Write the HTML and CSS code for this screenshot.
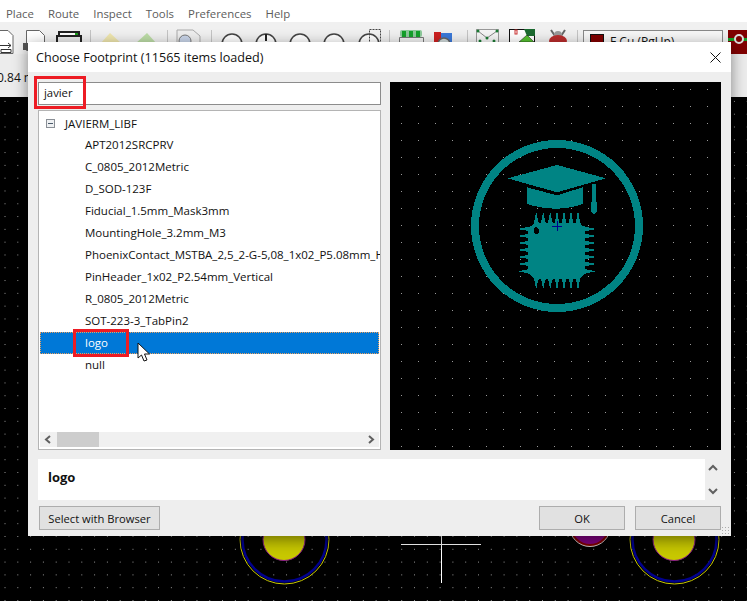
FILE: index.html
```html
<!DOCTYPE html>
<html lang="en">
<head>
  <meta charset="UTF-8">
  <title>Choose Footprint</title>
  <link rel="stylesheet" href="styles.css">
</head>
<body>

  <!-- main window behind the dialog -->
  <div class="menubar">
    <span>Place</span>
    <span>Route</span>
    <span>Inspect</span>
    <span>Tools</span>
    <span>Preferences</span>
    <span>Help</span>
  </div>

  <div class="toolbar">
    <svg class="tool-icons" width="747" height="32" viewBox="0 22 747 32">
      <path d="M90.500 30V42M167.500 30V42M211.500 30V42M389.500 30V42M467.500 30V42M577.500 30V42" stroke="#c4c4c4"/>
      <path d="M-1 30.500h9l5 5v18H-1z" fill="#fff" stroke="#666"/>
      <path d="M0 45.500h11M8 43l3 2.500-3 2.500" fill="none" stroke="#333"/>
      <path d="M1 49.500h10v3H1z" fill="none" stroke="#333"/>
      <path d="M26.500 30.500h13l5 5v15h-18z" fill="#fff" stroke="#666"/>
      <rect x="23" y="43" width="5" height="7" fill="#555"/>
      <path d="M59 36v-4h20v4" fill="#fff" stroke="#222" stroke-width="2"/>
      <rect x="57" y="36" width="24" height="9" fill="#e8e8e8" stroke="#222" stroke-width="2"/>
      <rect x="75" y="33" width="3" height="2" fill="#1a9c1a"/>
      <path d="M100 44l10-11 12 11z" fill="#efe6ae"/>
      <path d="M135 44l12-11 10 11z" fill="#bcdca6"/>
      <path d="M177 30h16l7 6v8h-23z" fill="#eee" stroke="#aaa"/>
      <circle cx="185" cy="41" r="6" fill="#c8d4e8" stroke="#777"/>
      <circle cx="232" cy="44" r="10" fill="#fff" stroke="#444" stroke-width="1.500"/>
      <circle cx="266" cy="44" r="10" fill="#fff" stroke="#444" stroke-width="1.500"/>
      <path d="M266 34v7" stroke="#222" stroke-width="2"/>
      <circle cx="300" cy="44" r="10" fill="#fff" stroke="#444" stroke-width="1.500"/>
      <circle cx="334" cy="44" r="10" fill="#fff" stroke="#444" stroke-width="1.500"/>
      <circle cx="369" cy="44" r="10" fill="#fff" stroke="#444" stroke-width="1.500"/>
      <rect x="369.500" y="29.500" width="11" height="13" fill="none" stroke="#444" stroke-dasharray="2 1"/>
      <path d="M399.500 44V37.500H423.500V44" fill="none" stroke="#777"/>
      <rect x="400" y="30" width="22" height="7" rx="2" fill="#8dc99a"/>
      <rect x="402" y="31" width="4" height="6" fill="#14a02a"/>
      <rect x="409" y="31" width="4" height="6" fill="#14a02a"/>
      <rect x="416" y="31" width="4" height="6" fill="#14a02a"/>
      <rect x="434" y="32" width="7" height="10" fill="#cc2020"/>
      <rect x="441" y="33" width="11" height="9" fill="#3a78d8"/>
      <circle cx="444" cy="44" r="6" fill="#cfd8d8" stroke="#666" stroke-width="1.500"/>
      <rect x="476.500" y="29.500" width="22" height="13" fill="#f4f4f4" stroke="#999"/>
      <path d="M478 31l9 7 10-7" fill="none" stroke="#888"/>
      <circle cx="478" cy="31" r="1.500" fill="#1c7a34"/>
      <circle cx="497" cy="31" r="1.500" fill="#1c7a34"/>
      <circle cx="487" cy="38" r="1.500" fill="#1c7a34"/>
      <circle cx="480" cy="41" r="1.500" fill="#1c7a34"/>
      <circle cx="494" cy="41" r="1.500" fill="#1c7a34"/>
      <rect x="509.500" y="29.500" width="25" height="13" fill="#fff" stroke="#111"/>
      <path d="M524 29h11v7h-8z" fill="#1c6a30"/>
      <path d="M519 42l8-7 7 7z" fill="#55c030" stroke="#111" stroke-width=".5"/>
      <rect x="515" y="30" width="2" height="4" fill="none" stroke="#c33"/>
      <path d="M551 30l4 6M565 30l-4 6" stroke="#666" stroke-width="2"/>
      <circle cx="558" cy="35" r="4" fill="#999"/>
      <ellipse cx="558" cy="41" rx="9" ry="6" fill="#b82c2c"/>
      <rect x="583.500" y="30.500" width="139" height="14" fill="#f6f6f6" stroke="#888"/>
      <rect x="590.500" y="34.500" width="13" height="10" fill="#800000" stroke="#111"/>
      <text x="610" y="46" class="layer-name">F.Cu (PgUp)</text>
      <rect x="728" y="30" width="19" height="24" fill="#800000"/>
      <rect x="728" y="38" width="19" height="3" fill="#14a02a"/>
      <circle cx="739" cy="39" r="4" fill="#800000" stroke="#ddd" stroke-width="2"/>
    </svg>
  </div>

  <div class="toolbar-two">
    <span class="coord">0.84 m</span>
  </div>

  <div class="canvas">
    <!-- pads that show under the dialog -->
    <svg class="pads" width="747" height="66" viewBox="0 535 747 66">
      <circle cx="284.500" cy="539.500" r="44.500" fill="none" stroke="#c8c800"/>
      <circle cx="284.500" cy="539.500" r="42" fill="none" stroke="#00008c" stroke-width="2.500"/>
      <circle cx="284" cy="539.500" r="21" fill="#c8c800" stroke="#8a1a8a"/>
      <circle cx="590" cy="526" r="20.500" fill="#800000" stroke="#c8c8c8"/>
      <circle cx="590" cy="526" r="18" fill="#800080"/>
      <circle cx="674.500" cy="539.500" r="44.500" fill="none" stroke="#c8c800"/>
      <circle cx="674.500" cy="539.500" r="42" fill="none" stroke="#00008c" stroke-width="2.500"/>
      <circle cx="674" cy="539.500" r="21" fill="#c8c800" stroke="#8a1a8a"/>
      <path d="M401 544.500h80M441.500 535v48" stroke="#fff"/>
    </svg>
  </div>

  <!-- dialog -->
  <div class="dialog">
    <div class="dialog-title">
      <span>Choose Footprint (11565 items loaded)</span>
      <svg class="close-x" width="11" height="11" viewBox="0 0 11 11">
        <path d="M.5.500l10 10M10.500.500l-10 10" stroke="#111" fill="none"/>
      </svg>
    </div>

    <div class="dialog-body">
      <div class="main-row">
        <div class="left-col">
          <div class="search-box">javier</div>
          <div class="tree">
            <div class="tree-row lib-row">
              <span class="expander"></span>
              <span>JAVIERM_LIBF</span>
            </div>
            <div class="tree-row">APT2012SRCPRV</div>
            <div class="tree-row">C_0805_2012Metric</div>
            <div class="tree-row">D_SOD-123F</div>
            <div class="tree-row">Fiducial_1.5mm_Mask3mm</div>
            <div class="tree-row">MountingHole_3.2mm_M3</div>
            <div class="tree-row">PhoenixContact_MSTBA_2,5_2-G-5,08_1x02_P5.08mm_Horizontal</div>
            <div class="tree-row">PinHeader_1x02_P2.54mm_Vertical</div>
            <div class="tree-row">R_0805_2012Metric</div>
            <div class="tree-row">SOT-223-3_TabPin2</div>
            <div class="tree-row selected">logo</div>
            <div class="tree-row">null</div>

            <div class="hscroll">
              <svg width="17" height="15" viewBox="0 0 17 15"><path d="M10 4l-4 3.500 4 3.500" class="arrow"/></svg>
              <div class="hscroll-track"><div class="hscroll-thumb"></div></div>
              <svg width="17" height="15" viewBox="0 0 17 15"><path d="M7 4l4 3.500-4 3.500" class="arrow"/></svg>
            </div>
          </div>
        </div>

        <div class="preview">
          <svg width="210" height="187" viewBox="0 0 630 561">
            <defs>
              <path id="pin-v" d="M-10 42L-6 22-3 12-2 0H2L3 12 6 22 10 42z"/>
              <path id="pin-h" d="M42-10L22-5 12-3 0-1V1L12 3 22 5 42 10z"/>
            </defs>
            <g fill="#008484" shape-rendering="crispEdges">
              <ellipse cx="318" cy="288" rx="246" ry="246" fill="none" stroke="#008484" stroke-width="24"/>
              <path d="M170 145L318 105 465 145 318 187z"/>
              <path d="M228 172L318 196 395 172V222Q318 250 228 222z"/>
              <path d="M423 162H435V215L438 220V245L429 255 420 245V220L423 215z"/>
              <path d="M250 280H385L402 295V430L385 447H250L232 430V295z"/>
              <use href="#pin-v" x="256" y="250"/>
              <use href="#pin-v" x="277" y="250"/>
              <use href="#pin-v" x="298" y="250"/>
              <use href="#pin-v" x="318" y="250"/>
              <use href="#pin-v" x="339" y="250"/>
              <use href="#pin-v" x="360" y="250"/>
              <use href="#pin-v" x="381" y="250"/>
              <use href="#pin-v" transform="translate(256 474) scale(1 -1)"/>
              <use href="#pin-v" transform="translate(277 474) scale(1 -1)"/>
              <use href="#pin-v" transform="translate(298 474) scale(1 -1)"/>
              <use href="#pin-v" transform="translate(318 474) scale(1 -1)"/>
              <use href="#pin-v" transform="translate(339 474) scale(1 -1)"/>
              <use href="#pin-v" transform="translate(360 474) scale(1 -1)"/>
              <use href="#pin-v" transform="translate(381 474) scale(1 -1)"/>
              <use href="#pin-h" x="204" y="297"/>
              <use href="#pin-h" x="204" y="318"/>
              <use href="#pin-h" x="204" y="339"/>
              <use href="#pin-h" x="204" y="360"/>
              <use href="#pin-h" x="204" y="381"/>
              <use href="#pin-h" x="204" y="402"/>
              <use href="#pin-h" x="204" y="424"/>
              <use href="#pin-h" transform="translate(433 297) scale(-1 1)"/>
              <use href="#pin-h" transform="translate(433 318) scale(-1 1)"/>
              <use href="#pin-h" transform="translate(433 339) scale(-1 1)"/>
              <use href="#pin-h" transform="translate(433 360) scale(-1 1)"/>
              <use href="#pin-h" transform="translate(433 381) scale(-1 1)"/>
              <use href="#pin-h" transform="translate(433 402) scale(-1 1)"/>
              <use href="#pin-h" transform="translate(433 424) scale(-1 1)"/>
              <ellipse cx="256" cy="302" rx="8" ry="10" fill="#000"/>
            </g>
            <path d="M303 289H333M318 274V304" stroke="#00008c" stroke-width="3" shape-rendering="crispEdges"/>
          </svg>
        </div>
      </div>

      <div class="details-row">
        <div class="details">logo</div>
        <div class="vscroll">
          <svg width="16" height="12" viewBox="0 0 16 12"><path d="M4 8l4-4 4 4" class="arrow"/></svg>
          <svg width="16" height="12" viewBox="0 0 16 12"><path d="M4 4l4 4 4-4" class="arrow"/></svg>
        </div>
      </div>

      <div class="button-row">
        <button class="btn browser-btn">Select with Browser</button>
        <div class="spacer"></div>
        <button class="btn">OK</button>
        <button class="btn">Cancel</button>
      </div>
    </div>
    <div class="grip"></div>
  </div>

  <!-- red marks drawn on top of the screenshot, and the mouse pointer -->
  <div class="mark mark-search"></div>
  <div class="mark mark-logo"></div>
  <svg class="pointer" width="14" height="21" viewBox="0 0 14 21">
    <path d="M1 1V16L4.500 13 7 19 10 18 7.500 12H12.500z" fill="#fff" stroke="#111"/>
  </svg>

</body>
</html>
```

FILE: styles.css
```css
html, body {
  margin: 0;
  height: 100%;
  overflow: hidden;
}

body {
  font-family: "Open Sans", "Noto Sans", sans-serif;
  font-size: 11.5px;
  color: #111;
  background: #000;
  display: flex;
  flex-direction: column;
}

.menubar {
  height: 22px;
  flex: none;
  box-sizing: border-box;
  background: #fff;
  color: #5c5c5c;
  font-size: 11.4px;
  display: flex;
  align-items: center;
  padding: 4px 0 0 6px;
  gap: 14px;
}

.toolbar {
  height: 32px;
  flex: none;
  background: #f0f0f0;
}

.tool-icons {
  display: block;
}

.layer-name {
  font-size: 12px;
  fill: #111;
}

.toolbar-two {
  height: 43px;
  flex: none;
  background: #ececec;
  overflow: hidden;
}

.coord {
  display: block;
  font-size: 12px;
  margin: 15px 0 0 -3px;
}

.canvas {
  flex: 1;
  background-color: #000;
  background-image: radial-gradient(circle at center, #999 0, #999 .6px, transparent .8px);
  background-size: 12.8px 12.8px;
  background-position: -1.4px -2px;
  position: relative;
}

.pads {
  position: absolute;
  left: 0;
  bottom: 0;
}

.dialog {
  position: absolute;
  left: 28px;
  top: 42px;
  width: 703px;
  height: 494px;
  background: #eeeeee;
  box-shadow: 0 4px 14px rgba(0, 0, 0, .45);
  display: flex;
  flex-direction: column;
}

.dialog-title {
  height: 30px;
  flex: none;
  background: #fff;
  display: flex;
  align-items: center;
  justify-content: space-between;
  padding: 0 10px 0 8px;
  font-size: 12.6px;
}

.dialog-body {
  flex: 1;
  padding: 10px 10px 6px 10px;
  display: flex;
  flex-direction: column;
}

.main-row {
  display: flex;
  gap: 9px;
  height: 368px;
}

.left-col {
  width: 343px;
  display: flex;
  flex-direction: column;
  gap: 5px;
}

.search-box {
  height: 23px;
  box-sizing: border-box;
  background: #fff;
  border: 1px solid #8c8c8c;
  padding-left: 5px;
  font-size: 11.3px;
  line-height: 20px;
}

.tree {
  flex: 1;
  position: relative;
  overflow: hidden;
  box-sizing: border-box;
  background: #fff;
  border: 1px solid #b4b4b4;
  padding: 1px;
}

.tree-row {
  height: 22px;
  line-height: 21px;
  padding-left: 45px;
  white-space: nowrap;
  box-sizing: border-box;
}

.lib-row {
  padding-left: 6px;
  display: flex;
  align-items: center;
  gap: 10px;
}

.expander {
  width: 7px;
  height: 7px;
  background: #eef0f2;
  border: 1px solid #8a8f96;
  position: relative;
}

.expander::after {
  content: "";
  position: absolute;
  left: 1px;
  right: 1px;
  top: 3px;
  height: 1px;
  background: #4a5a6a;
}

.selected {
  background: #0078d7;
  color: #fff;
  outline: 1px dotted #e8a060;
  outline-offset: -1px;
}

.hscroll {
  position: absolute;
  left: 1px;
  right: 1px;
  bottom: 2px;
  height: 15px;
  background: #f0f0f0;
  display: flex;
}

.hscroll-track {
  flex: 1;
}

.hscroll-thumb {
  width: 42px;
  height: 100%;
  background: #cdcdcd;
}

.arrow {
  fill: none;
  stroke: #606060;
  stroke-width: 2;
}

.preview {
  flex: 1;
  background-color: #000;
  background-image: radial-gradient(circle at center, #999 0, #999 .6px, transparent .8px);
  background-size: 17px 17px;
  background-position: 3px -1px;
  display: flex;
  justify-content: center;
  padding-top: 48px;
  box-sizing: border-box;
}

.details-row {
  display: flex;
  margin-top: 9px;
  height: 41px;
}

.details {
  flex: 1;
  background: #fff;
  font-weight: 700;
  font-size: 13px;
  line-height: 37px;
  padding-left: 10px;
}

.vscroll {
  width: 16px;
  display: flex;
  flex-direction: column;
  justify-content: space-between;
  padding: 3px 0;
  box-sizing: border-box;
}

.button-row {
  display: flex;
  gap: 10px;
  margin-top: 6px;
  padding-left: 1px;
}

.spacer {
  flex: 1;
}

.btn {
  font-family: inherit;
  font-size: 11.2px;
  color: #111;
  width: 86px;
  height: 24px;
  padding: 0;
  background: #e1e1e1;
  border: 1px solid #adadad;
}

.browser-btn {
  width: 121px;
}

.grip {
  position: absolute;
  right: 2px;
  bottom: 2px;
  width: 8px;
  height: 8px;
  background-image: radial-gradient(circle, #aaa 1px, transparent 1px);
  background-size: 3px 3px;
}

.mark {
  position: absolute;
  border: 3px solid #ed1c24;
  box-sizing: border-box;
}

.mark-search {
  left: 34px;
  top: 76px;
  width: 52px;
  height: 33px;
}

.mark-logo {
  left: 73px;
  top: 329px;
  width: 56px;
  height: 28px;
}

.pointer {
  position: absolute;
  left: 137px;
  top: 342px;
}
```
